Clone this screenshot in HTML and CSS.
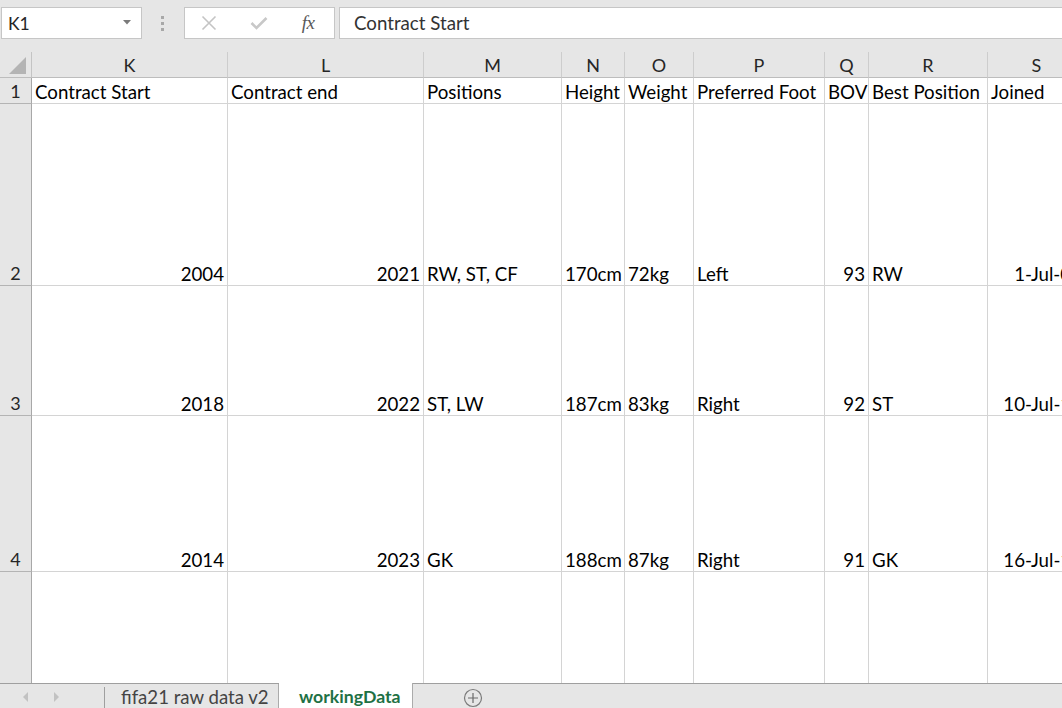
FILE: index.html
```html
<!DOCTYPE html>
<html lang="en">
<head>
<meta charset="utf-8">
<title>workingData</title>
<link rel="stylesheet" href="styles.css">
</head>
<body>
<div class="app">
  <div class="toolbar">
    <div class="namebox">
      <span class="namebox-text">K1</span>
      <svg class="caret" width="8" height="5" viewBox="0 0 8 5"><path d="M0 0 H8 L4 4.5 Z" fill="#7a7a7a"/></svg>
    </div>
    <div class="grip">
      <svg width="4" height="16" viewBox="0 0 4 16"><rect x="0" y="0" width="3" height="3" fill="#a8a8a8"/><rect x="0" y="6" width="3" height="3" fill="#a8a8a8"/><rect x="0" y="12" width="3" height="3" fill="#a8a8a8"/></svg>
    </div>
    <div class="fxbox">
      <span class="fx-slot slot-x"><svg width="16" height="16" viewBox="0 0 16 16"><path d="M1.5 1.5 L14.5 14.5 M14.5 1.5 L1.5 14.5" stroke="#c4c4c4" stroke-width="1.6" fill="none"/></svg></span>
      <span class="fx-slot slot-check"><svg width="18" height="14" viewBox="0 0 18 14"><path d="M1.5 7 L6.5 12 L16.5 2" stroke="#c8c8c8" stroke-width="2.6" fill="none"/></svg></span>
      <span class="fx-slot slot-fx"><span class="fx-text">fx</span></span>
    </div>
    <div class="formula">Contract Start</div>
  </div>

  <div class="sheet">
    <div class="corner"><svg width="18" height="18" viewBox="0 0 18 18"><path d="M17 0 V17 H0 Z" fill="#b4b4b4"/></svg></div>
    <div class="colhead">K</div>
    <div class="colhead">L</div>
    <div class="colhead">M</div>
    <div class="colhead">N</div>
    <div class="colhead">O</div>
    <div class="colhead">P</div>
    <div class="colhead">Q</div>
    <div class="colhead">R</div>
    <div class="colhead">S</div>

    <div class="rowhead">1</div>
    <div class="cell">Contract Start</div>
    <div class="cell">Contract end</div>
    <div class="cell">Positions</div>
    <div class="cell">Height</div>
    <div class="cell">Weight</div>
    <div class="cell">Preferred Foot</div>
    <div class="cell">BOV</div>
    <div class="cell">Best Position</div>
    <div class="cell">Joined</div>

    <div class="rowhead">2</div>
    <div class="cell num">2004</div>
    <div class="cell num">2021</div>
    <div class="cell">RW, ST, CF</div>
    <div class="cell">170cm</div>
    <div class="cell">72kg</div>
    <div class="cell">Left</div>
    <div class="cell num">93</div>
    <div class="cell">RW</div>
    <div class="cell num">1-Jul-04</div>

    <div class="rowhead">3</div>
    <div class="cell num">2018</div>
    <div class="cell num">2022</div>
    <div class="cell">ST, LW</div>
    <div class="cell">187cm</div>
    <div class="cell">83kg</div>
    <div class="cell">Right</div>
    <div class="cell num">92</div>
    <div class="cell">ST</div>
    <div class="cell num">10-Jul-18</div>

    <div class="rowhead">4</div>
    <div class="cell num">2014</div>
    <div class="cell num">2023</div>
    <div class="cell">GK</div>
    <div class="cell">188cm</div>
    <div class="cell">87kg</div>
    <div class="cell">Right</div>
    <div class="cell num">91</div>
    <div class="cell">GK</div>
    <div class="cell num">16-Jul-14</div>

    <div class="rowhead last"></div>
    <div class="cell last"></div>
    <div class="cell last"></div>
    <div class="cell last"></div>
    <div class="cell last"></div>
    <div class="cell last"></div>
    <div class="cell last"></div>
    <div class="cell last"></div>
    <div class="cell last"></div>
    <div class="cell last"></div>
  </div>

  <div class="tabbar">
    <div class="tabnav">
      <svg class="nav-arrow" width="6" height="10" viewBox="0 0 6 10"><path d="M5 0 V10 L0 5 Z" fill="#c2c2c2"/></svg>
      <svg class="nav-arrow" width="6" height="10" viewBox="0 0 6 10"><path d="M1 0 V10 L6 5 Z" fill="#c2c2c2"/></svg>
    </div>
    <div class="tabsep"></div>
    <div class="tab">fifa21 raw data v2</div>
    <div class="tab active">workingData</div>
    <div class="addtab">
      <svg width="20" height="20" viewBox="0 0 20 20"><circle cx="10" cy="10" r="8.5" stroke="#7a7a7a" stroke-width="1.2" fill="none"/><path d="M10 5 V15 M5 10 H15" stroke="#6a6a6a" stroke-width="1.2"/></svg>
    </div>
  </div>
</div>
</body>
</html>
```

FILE: styles.css
```css
* { box-sizing: border-box; }

html, body {
  margin: 0;
  padding: 0;
  background: #e6e6e6;
  font-family: "Lato", "Noto Sans", sans-serif;
  overflow: hidden;
}

.app {
  width: 1062px;
  height: 708px;
  display: flex;
  flex-direction: column;
  overflow: hidden;
}

/* ---------- formula bar ---------- */
.toolbar {
  height: 52px;
  flex: none;
  display: flex;
  align-items: flex-start;
  padding-top: 7px;
  padding-left: 1px;
}

.namebox {
  width: 141px;
  height: 32px;
  background: #fff;
  border: 1px solid #c6c6c6;
  display: flex;
  align-items: center;
  justify-content: space-between;
  padding: 0 10px 0 6px;
}

.namebox-text {
  font-size: 17.5px;
  color: #262626;
}

.caret { margin-bottom: 2px; }

.grip {
  width: 42px;
  height: 32px;
  display: flex;
  align-items: center;
  justify-content: center;
  padding-top: 1px;
}

.fxbox {
  width: 151px;
  height: 32px;
  background: #fff;
  border: 1px solid #c6c6c6;
  display: flex;
  align-items: center;
}

.fx-slot {
  display: flex;
  align-items: center;
  justify-content: center;
  height: 100%;
}

.slot-x { width: 47px; }
.slot-check { width: 54px; }
.slot-fx { width: 44px; }

.fx-text {
  font-family: "Liberation Serif", "DejaVu Serif", serif;
  font-style: italic;
  font-size: 19px;
  color: #595959;
  letter-spacing: -0.5px;
}

.formula {
  flex: 1;
  margin-left: 4px;
  height: 32px;
  background: #fff;
  border: 1px solid #c6c6c6;
  border-right: none;
  font-size: 18.7px;
  color: #333;
  display: flex;
  align-items: center;
  padding-left: 14px;
  padding-bottom: 1px;
}

/* ---------- grid ---------- */
.sheet {
  flex: none;
  height: 631px;
  display: grid;
  grid-template-columns: 32px 196px 196px 138px 63px 69px 131px 44px 119px 98px;
  grid-template-rows: 26px 26px 182px 130px 156px 111px;
  background: #fff;
  overflow: hidden;
  font-size: 18.7px;
  line-height: 20px;
}

.corner,
.colhead,
.rowhead,
.cell {
  display: flex;
  align-items: flex-end;
  white-space: nowrap;
  overflow: visible;
}

.corner {
  background: #e6e6e6;
  border-right: 1px solid #c4c4c4;
  border-bottom: 1px solid #bdbdbd;
  justify-content: flex-end;
  padding: 0 4px 2px 0;
}

.colhead {
  background: #e6e6e6;
  border-right: 1px solid #cdcdcd;
  border-bottom: 1px solid #bdbdbd;
  justify-content: center;
  color: #262626;
  padding-bottom: 2px;
  font-size: 18px;
}

.rowhead {
  background: #e6e6e6;
  border-right: 1px solid #a8a8a8;
  border-bottom: 1px solid #b4b4b4;
  justify-content: center;
  color: #262626;
  padding-bottom: 2px;
  font-size: 18px;
}

.cell {
  border-right: 1px solid #d4d4d4;
  border-bottom: 1px solid #d4d4d4;
  padding: 0 3px 1px 3px;
  color: #000;
}

.cell.num { justify-content: flex-end; }

.rowhead.last,
.cell.last { border-bottom: none; }

/* ---------- sheet tabs ---------- */
.tabbar {
  flex: 1;
  display: flex;
  align-items: stretch;
  border-top: 1px solid #9f9f9f;
  background: #e6e6e6;
  font-size: 18.6px;
}

.tabnav {
  width: 104px;
  display: flex;
  align-items: center;
  padding-left: 23px;
  gap: 24px;
  padding-top: 2px;
}

.tabsep {
  width: 1px;
  margin-top: 3px;
  background: #9f9f9f;
}

.tab {
  width: 174px;
  border-right: 1px solid #ababab;
  color: #444;
  display: flex;
  align-items: center;
  padding-left: 16px;
  padding-top: 1px;
}

.tab.active {
  width: 134px;
  margin-top: -1px;
  background: #fff;
  color: #1e7145;
  font-weight: 700;
  font-size: 17.7px;
  padding-left: 20px;
  padding-top: 2px;
}

.addtab {
  width: 120px;
  display: flex;
  align-items: center;
  padding-left: 50px;
  padding-top: 3px;
}
```
